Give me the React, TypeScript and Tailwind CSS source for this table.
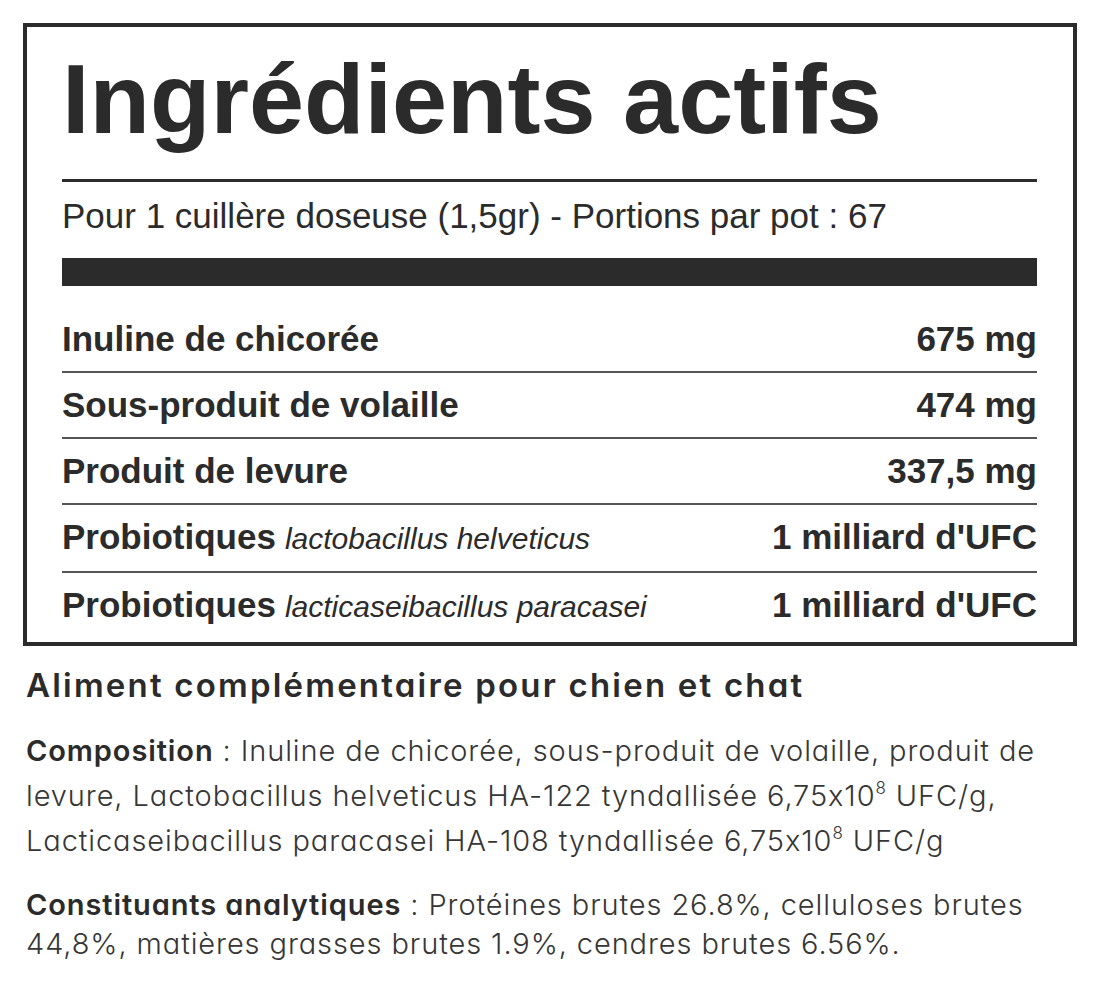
import React from "react";

const rows: { name: string; latin?: string; value: string }[] = [
  { name: "Inuline de chicorée", value: "675 mg" },
  { name: "Sous-produit de volaille", value: "474 mg" },
  { name: "Produit de levure", value: "337,5 mg" },
  { name: "Probiotiques", latin: "lactobacillus helveticus", value: "1 milliard d'UFC" },
  { name: "Probiotiques", latin: "lacticaseibacillus paracasei", value: "1 milliard d'UFC" },
];

export default function App() {
  return (
    <div className="min-h-[1000px] w-[1100px] bg-white text-[#2b2b2b]">
      <div className="pt-[23px] pl-[23px]">
        <div className="w-[1054px] border-4 border-[#2b2b2b] pl-[35px] pr-[36px] pt-[22px] pb-[3px] font-['Liberation_Sans',Arial,sans-serif]">
          <h1 className="text-[99px] font-bold leading-none whitespace-nowrap">Ingrédients actifs</h1>
          <div className="mt-[31px] h-[3px] bg-[#2b2b2b]" />
          <p className="mt-[14px] text-[35px] leading-[40px] whitespace-nowrap">
            Pour 1 cuillère doseuse (1,5gr) - Portions par pot : 67
          </p>
          <div className="mt-[22px] h-[28px] bg-[#2b2b2b]" />
          <div className="pt-[21px]">
            {rows.map((r, i) => (
              <div
                key={i}
                className={`flex items-baseline justify-between py-[12px] ${
                  i < rows.length - 1 ? "border-b-2 border-[#555555]" : ""
                }`}
              >
                <div className="text-[35px] leading-[40px] whitespace-nowrap">
                  <span className="font-bold">{r.name}</span>
                  {r.latin && <span className="ml-[9px] text-[30px] italic">{r.latin}</span>}
                </div>
                <div className="text-[35px] leading-[40px] font-bold whitespace-nowrap">{r.value}</div>
              </div>
            ))}
          </div>
        </div>
      </div>

      <div className="pl-[26px] pt-[21px] font-['Inter',sans-serif] [font-feature-settings:'cv11','calt'_0] text-[#363636]">
        <h2 className="text-[33px] leading-[36px] font-semibold tracking-[2.2px] text-[#2b2b2b] whitespace-nowrap">
          Aliment complémentaire pour chien et chat
        </h2>
        <p className="mt-[25px] text-[29px] leading-[45px] font-light tracking-[0.9px] whitespace-nowrap">
          <span className="font-semibold text-[#2b2b2b]">Composition</span> : Inuline de chicorée, sous-produit de volaille, produit de
          <br />
          levure, Lactobacillus helveticus HA-122 tyndallisée 6,75x10
          <sup className="text-[17px] top-[-12px]">8</sup> UFC/g,
          <br />
          Lacticaseibacillus paracasei HA-108 tyndallisée 6,75x10
          <sup className="text-[17px] top-[-12px]">8</sup> UFC/g
        </p>
        <p className="mt-[22px] text-[29px] leading-[39px] font-light tracking-[0.9px] whitespace-nowrap">
          <span className="font-semibold text-[#2b2b2b]">Constituants analytiques</span> : Protéines brutes 26.8%, celluloses brutes
          <br />
          44,8%, matières grasses brutes 1.9%, cendres brutes 6.56%.
        </p>
      </div>
    </div>
  );
}
